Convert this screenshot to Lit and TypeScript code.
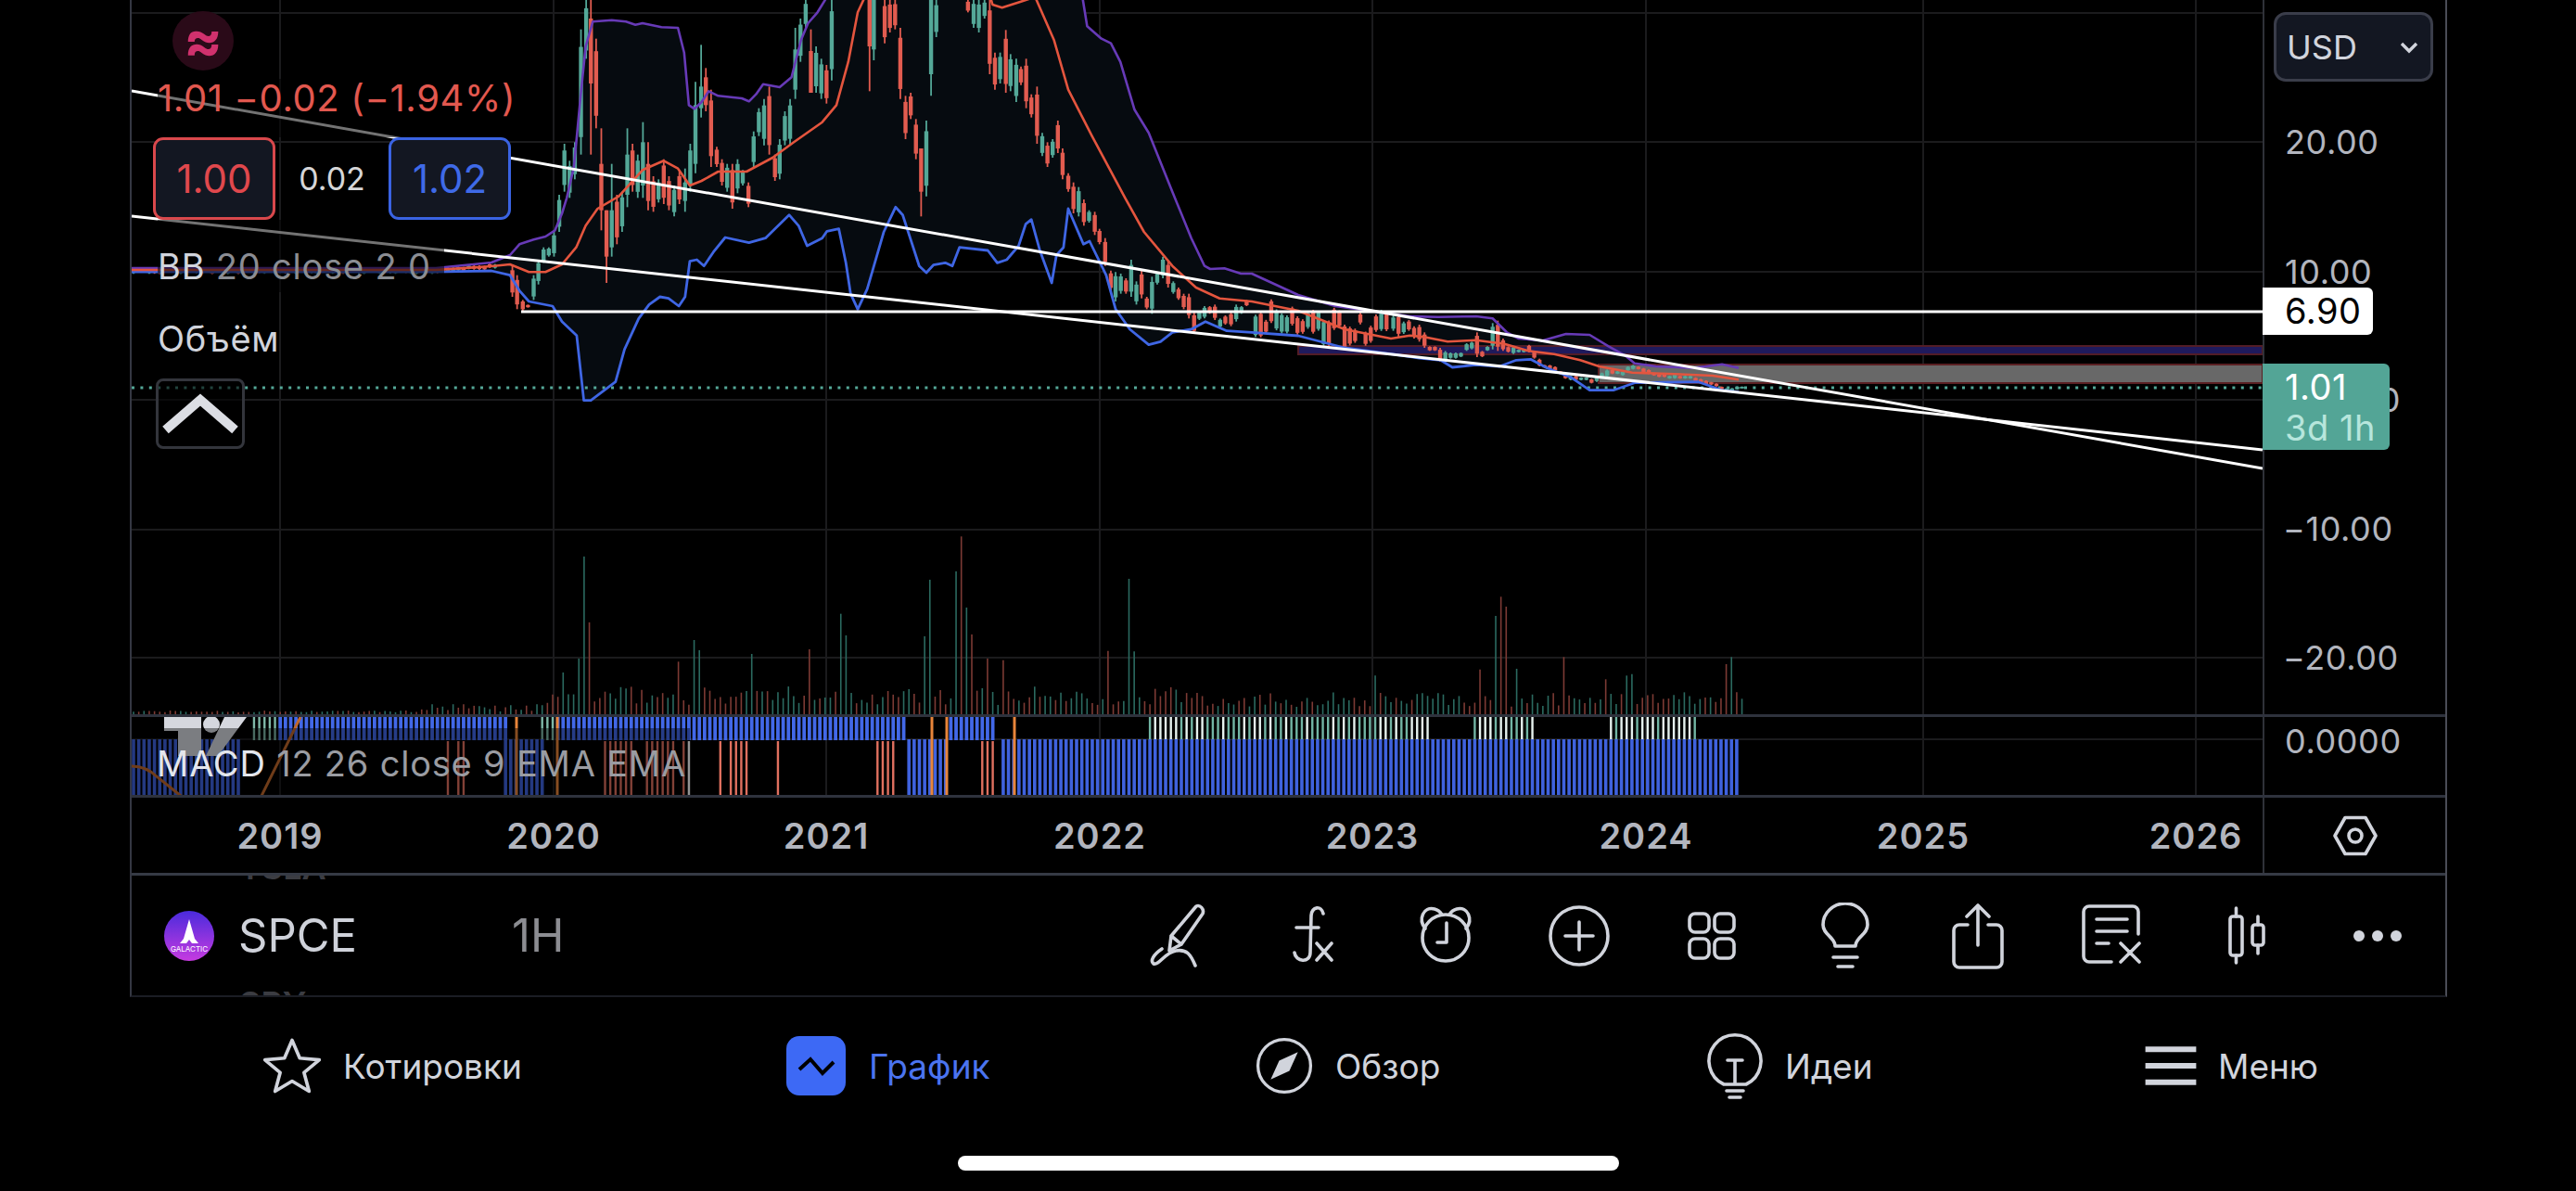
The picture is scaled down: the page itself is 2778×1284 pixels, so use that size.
import { LitElement, css, html, svg } from 'lit';
import { customElement } from 'lit/decorators.js';

type Pt = [number, number];
// [zoomX, colour, wickTop, wickBottom, bodyTop?, bodyBottom?]
type Candle = [number, 'g' | 'r', number, number, number?, number?];

const TEAL = '#54a898';
const RED = '#e25c50';
const STEP = 5.65;

const YEAR_X = [302, 597, 891, 1186, 1480, 1775, 2074, 2368];
const YEARS = ['2019', '2020', '2021', '2022', '2023', '2024', '2025', '2026'];
const GRID_Y = [14, 153, 293, 431, 571, 709];

const rnd = (i: number) => {
  const v = Math.sin(i * 12.9898 + 4.1) * 43758.5453;
  return v - Math.floor(v);
};

// traced with the horizontally squeezed crops, so x needs scaling back
const fromA = (p: Pt[]): Pt[] => p.map(([x, y]) => [550 + x / 1.96, y / 3]);
const fromB = (p: Pt[]): Pt[] => p.map(([x, y]) => [1500 + x / 1.96, 280 + y / 3]);
const toPoints = (p: Pt[]) => p.map(([x, y]) => `${x.toFixed(1)},${y.toFixed(1)}`).join(' ');

const UPPER: Pt[] = [
  [142, 289], [470, 289], [530, 283],
  ...fromA([[0, 825], [20, 790], [50, 775], [75, 765], [95, 745], [110, 690], [120, 640], [135, 540], [150, 300], [160, 150], [175, 70], [215, 65], [245, 70], [265, 80], [280, 75], [320, 88], [355, 90], [368, 170], [378, 340], [390, 352], [405, 330], [420, 295], [440, 310], [490, 318], [505, 328], [520, 305], [535, 272], [570, 282], [595, 250], [615, 130], [630, 75], [650, 40], [670, -10], [1210, -10], [1220, 85], [1250, 125], [1270, 140], [1290, 200], [1320, 355], [1350, 430], [1400, 620], [1440, 770], [1468, 860], [1480, 870], [1510, 868], [1545, 885], [1568, 885]]),
  [1400, 318], [1440, 330],
  ...fromB([[0, 175], [40, 183], [100, 185], [180, 183], [215, 190], [245, 235], [270, 255], [320, 262], [370, 240], [420, 243], [460, 280], [495, 310], [515, 335], [560, 345], [640, 350], [700, 338], [735, 350]]),
];

const LOWER: Pt[] = [
  [142, 293], [470, 293], [530, 292],
  ...fromA([[0, 890], [20, 940], [40, 975], [90, 990], [110, 1040], [141, 1085], [156, 1295], [171, 1295], [223, 1235], [242, 1130], [272, 1030], [294, 985], [317, 960], [335, 965], [357, 990], [370, 960], [380, 845], [395, 840], [410, 860], [430, 815], [455, 768], [505, 785], [540, 770], [590, 695], [610, 730], [628, 795], [660, 770], [670, 748], [695, 740], [710, 850], [720, 950], [735, 1000], [755, 935], [790, 750], [815, 670], [830, 695], [850, 790], [865, 860], [880, 882], [895, 857], [920, 850], [935, 860], [950, 800], [1010, 810], [1030, 850], [1050, 840], [1075, 795], [1090, 725], [1102, 710], [1120, 810], [1145, 915], [1155, 825], [1170, 800], [1180, 675], [1212, 790], [1225, 780], [1260, 890], [1280, 1000], [1310, 1065], [1350, 1115], [1375, 1105], [1400, 1075], [1440, 1065], [1470, 1040], [1515, 1070], [1568, 1075]]),
  [1400, 362], [1450, 375],
  ...fromB([[0, 305], [60, 318], [105, 325], [130, 348], [180, 340], [230, 345], [265, 325], [295, 322], [330, 350], [380, 380], [420, 422], [470, 422], [515, 398], [650, 395], [700, 422], [735, 428]]),
];

const BASIS: Pt[] = [
  [142, 291], [470, 291], [530, 287],
  ...fromA([[0, 855], [40, 880], [75, 880], [110, 855], [140, 800], [160, 730], [185, 675], [230, 635], [280, 550], [325, 520], [355, 545], [380, 600], [405, 585], [440, 555], [500, 555], [555, 510], [600, 460], [660, 395], [690, 340], [715, 200], [735, 40], [750, -10], [1015, -10], [1020, 15], [1040, 25], [1080, 5], [1110, -10], [1150, 130], [1180, 290], [1230, 440], [1300, 640], [1340, 750], [1400, 860], [1450, 930], [1500, 965], [1568, 975]]),
  [1400, 335], [1450, 355],
  ...fromB([[0, 255], [40, 245], [70, 250], [120, 265], [180, 260], [240, 272], [290, 295], [345, 305], [400, 325], [440, 345], [510, 365], [600, 370], [680, 375], [735, 388]]),
];

const CANDLES_A: Candle[] = [
  [5, 'r', 860, 960], [15, 'r', 890, 1000], [27, 'r', 970, 1005], [38, 'r', 985, 995], [50, 'g', 890, 970], [60, 'g', 840, 920], [71, 'g', 800, 850], [82, 'g', 800, 830], [93, 'g', 750, 830], [104, 'g', 630, 750], [115, 'g', 465, 620], [126, 'g', 520, 640], [137, 'g', 460, 580], [150, 'g', 95, 500], [161, 'g', 0, 190], [171, 'r', 0, 500, 60, 270], [182, 'r', 125, 415], [193, 'r', 415, 745, 530, 680], [204, 'r', 680, 915, 680, 830], [215, 'g', 530, 830, 680, 800], [226, 'r', 630, 790], [237, 'g', 620, 750], [248, 'g', 415, 670, 500, 630], [259, 'r', 465, 620], [270, 'g', 500, 640], [281, 'g', 395, 640, 460, 600], [292, 'r', 460, 680, 530, 650], [303, 'r', 570, 685], [314, 'g', 580, 655], [325, 'r', 515, 660], [336, 'r', 570, 680], [347, 'g', 600, 700], [358, 'r', 555, 660], [370, 'g', 545, 685, 590, 650], [381, 'g', 465, 620], [392, 'g', 265, 560, 340, 530], [404, 'g', 145, 380, 280, 350], [414, 'r', 220, 360, 250, 340], [425, 'r', 290, 540], [437, 'r', 475, 540], [448, 'r', 515, 600], [459, 'g', 530, 620], [470, 'r', 530, 675], [481, 'g', 515, 625], [492, 'g', 550, 600], [504, 'r', 590, 670], [515, 'g', 425, 540], [526, 'g', 350, 440], [537, 'g', 320, 470], [548, 'r', 280, 500], [560, 'r', 500, 585], [570, 'g', 450, 580], [581, 'g', 360, 470], [592, 'g', 320, 470], [603, 'g', 90, 320, 160, 290], [614, 'g', 60, 200], [625, 'g', 0, 90], [636, 'r', 95, 300, 165, 300], [647, 'g', 150, 300], [658, 'g', 190, 320], [669, 'r', 210, 335], [680, 'g', 0, 260],
  [760, 'r', 0, 295, 0, 150], [769, 'g', 0, 195, 0, 160], [792, 'r', 0, 140], [803, 'r', 0, 105], [814, 'r', 0, 95], [825, 'r', 90, 320], [836, 'r', 310, 450], [847, 'r', 300, 385], [858, 'r', 385, 515], [869, 'r', 480, 700, 480, 620], [880, 'g', 390, 635], [890, 'g', 0, 310, 0, 240], [901, 'g', 0, 120], [968, 'r', 0, 40], [980, 'g', 0, 90], [991, 'g', 0, 105], [1003, 'g', 0, 60], [1014, 'r', 0, 240], [1025, 'r', 170, 290], [1036, 'g', 170, 270], [1048, 'r', 97, 300], [1058, 'g', 175, 295], [1070, 'g', 190, 330], [1080, 'r', 215, 275], [1091, 'r', 190, 350], [1102, 'r', 305, 380], [1114, 'r', 280, 465], [1125, 'g', 430, 505], [1136, 'r', 460, 540], [1147, 'g', 450, 510], [1158, 'r', 390, 495], [1168, 'r', 480, 580], [1180, 'r', 560, 620], [1191, 'r', 590, 690], [1202, 'g', 605, 700], [1213, 'r', 645, 730], [1224, 'g', 680, 720], [1236, 'r', 685, 760], [1246, 'r', 740, 790], [1258, 'r', 770, 860], [1270, 'r', 875, 940], [1280, 'g', 880, 975], [1291, 'g', 885, 950], [1302, 'r', 900, 950], [1313, 'g', 840, 960], [1324, 'g', 910, 985], [1335, 'r', 875, 965], [1346, 'r', 960, 1000], [1357, 'g', 895, 1015], [1368, 'g', 880, 920], [1380, 'g', 830, 900], [1391, 'r', 845, 930], [1402, 'g', 910, 950], [1413, 'r', 930, 970], [1424, 'r', 950, 1000], [1435, 'r', 950, 1030], [1446, 'r', 1010, 1080], [1457, 'g', 1005, 1035], [1468, 'g', 990, 1030], [1479, 'r', 990, 1015], [1490, 'r', 985, 1035], [1501, 'g', 1030, 1060], [1512, 'r', 1020, 1050], [1524, 'r', 1010, 1055], [1535, 'g', 985, 1040], [1546, 'g', 990, 1015], [1557, 'r', 970, 990],
];

const CANDLES_B: Candle[] = [
  [5, 'g', 180, 230], [16, 'r', 175, 250], [27, 'g', 200, 240], [38, 'r', 195, 230], [49, 'r', 215, 255], [60, 'r', 210, 265], [71, 'r', 235, 285], [82, 'r', 280, 295], [93, 'r', 280, 295], [104, 'r', 285, 330], [115, 'g', 295, 330], [126, 'g', 300, 320], [137, 'g', 300, 320], [148, 'g', 300, 315], [160, 'g', 270, 295], [171, 'g', 265, 290], [182, 'r', 235, 315], [193, 'r', 295, 315], [204, 'g', 280, 295], [215, 'g', 205, 290], [226, 'r', 197, 295], [237, 'r', 255, 295], [248, 'r', 280, 300], [259, 'g', 280, 305], [270, 'g', 290, 300], [281, 'g', 288, 300], [292, 'r', 275, 300], [303, 'r', 295, 320], [314, 'r', 320, 345], [325, 'r', 340, 350], [336, 'r', 340, 355], [347, 'r', 345, 360], [358, 'r', 360, 370], [369, 'r', 370, 385], [380, 'g', 375, 390], [391, 'r', 375, 390], [402, 'g', 380, 390], [413, 'g', 380, 390], [424, 'r', 385, 400], [435, 'g', 375, 395], [446, 'g', 365, 385], [457, 'g', 355, 380], [468, 'r', 355, 370], [479, 'g', 360, 370], [490, 'g', 360, 375], [501, 'g', 345, 360], [512, 'g', 340, 355], [523, 'r', 345, 355], [534, 'r', 350, 365], [545, 'r', 355, 370], [556, 'r', 365, 375], [567, 'r', 370, 380], [578, 'r', 370, 380], [589, 'g', 375, 385], [600, 'g', 370, 385], [611, 'r', 375, 385], [622, 'g', 375, 385], [633, 'g', 375, 385], [644, 'r', 380, 395], [655, 'r', 385, 400], [666, 'r', 390, 405], [677, 'r', 395, 405], [688, 'r', 400, 410], [699, 'r', 410, 420], [710, 'g', 415, 425], [721, 'g', 415, 425], [732, 'g', 410, 420], [742, 'g', 410, 415],
];

// tall volume spikes, read from the crop: [zoomX, zoomY, green?]
const VOLUME_PEAKS: [number, number, boolean][] = [
  [437, 120, true], [442, 333, false], [432, 450, true], [417, 495, true], [540, 390, true], [545, 423, true], [525, 460, false], [595, 435, true], [649, 420, false], [678, 305, true], [683, 375, true], [761, 195, true], [757, 378, true], [782, 168, true], [787, 55, false], [797, 60, false], [792, 285, true], [801, 372, false], [815, 450, false], [830, 455, false], [925, 425, false], [949, 192, true], [953, 427, true], [1180, 505, true], [1294, 250, false], [1289, 312, true], [1299, 282, false], [1275, 485, false], [1309, 483, true], [1354, 445, false], [1393, 517, false], [1412, 505, true], [1417, 500, true], [1506, 468, false], [1511, 375, true], [1515, 445, true], [1521, 580, true],
];

function volumeBars() {
  const bars: { x: number; h: number; green: boolean }[] = [];
  for (let i = 0; i < 308; i++) {
    const x = 144 + i * STEP;
    let h = 2 + rnd(i) * 2;
    if (x > 450) h = 3 + rnd(i) * 8;
    if (x > 590) h = 10 + rnd(i) * 20;
    if (x > 1300) h = 8 + rnd(i) * 16;
    bars.push({ x, h, green: rnd(i + 500) > 0.5 });
  }
  for (const [zx, zy, green] of VOLUME_PEAKS) {
    const i = Math.round((zx - 12) / 4.92);
    bars[i] = { x: 144 + i * STEP, h: (630 - zy) / 3, green };
  }
  return bars;
}

const inRange = (x: number, ranges: number[][]) => ranges.some(([a, b]) => x >= a && x <= b);

// one weekly histogram column, by which stretch of the chart it falls in
function macdBars() {
  const out: { x: number; y: number; h: number; w: number; color: string }[] = [];
  for (let i = 0; i < 308; i++) {
    const x = 144 + i * STEP;
    if (inRange(x, [[302, 549], [601, 980], [1025, 1074]])) out.push({ x, y: 773, h: 25, w: 3.8, color: '#4268e8' });
    if (inRange(x, [[272, 302], [583, 601]])) out.push({ x, y: 773, h: 25, w: 2.4, color: '#7fb8a8' });
    if (inRange(x, [[1238, 1542], [1588, 1657], [1734, 1832]])) {
      out.push({ x, y: 773, h: 24, w: 2.4, color: rnd(i) > 0.45 ? '#e6f2ee' : '#72b5a4' });
    }
    if (inRange(x, [[144, 262], [541, 589], [980, 1003], [1008, 1020], [1077, 1878]])) {
      out.push({ x, y: 797, h: 60, w: 3.6, color: '#3f62de' });
    }
    if (inRange(x, [[479, 505], [652, 744], [776, 813], [834, 842], [942, 974], [1054, 1071]]) && rnd(i + 9) > 0.3) {
      out.push({ x, y: 799, h: 58, w: 2.4, color: x > 740 && x < 746 ? '#fff' : '#e0705f' });
    }
  }
  return out;
}

const strokeIcon = (size: number, body: unknown) => html`<svg class="icon" width=${size} height=${size} viewBox="0 0 72 72">${body}</svg>`;

@customElement('app-root')
export class AppRoot extends LitElement {
  static styles = css`
    :host {
      display: block;
      width: 2778px;
      height: 1284px;
      overflow: hidden;
      background: #000;
      font-family: Inter, Roboto, 'Noto Sans', sans-serif;
      color: #d1d4dc;
    }

    .screen {
      display: flex;
      flex-direction: column;
      height: 100%;
    }

    .frame {
      margin-left: 140px;
      width: 2499px;
      box-sizing: border-box;
      border-left: 2px solid #343742;
      border-right: 2px solid #4a4c56;
      height: 1075px;
      border-bottom: 2px solid #1b1d24;
      display: flex;
      flex-direction: column;
    }

    .pane {
      display: grid;
      grid-template-columns: 2298px 1fr;
      border-bottom: 3px solid #2e323d;
    }

    .pane.main { height: 770px; }
    .pane.macd { height: 84px; }

    .plot {
      position: relative;
      overflow: hidden;
    }

    .plot svg {
      display: block;
      width: 2298px;
      height: 100%;
    }

    .axis {
      position: relative;
      border-left: 2px solid #2f3138;
    }

    .tick {
      position: absolute;
      transform: translateY(-50%);
      font-size: 36px;
      line-height: 40px;
      letter-spacing: 0.6px;
      color: #b2b5be;
      white-space: nowrap;
    }

    .currency {
      position: absolute;
      left: 10px;
      top: 13px;
      width: 172px;
      height: 75px;
      box-sizing: border-box;
      border: 3px solid #3a3d4a;
      border-radius: 13px;
      background: #131722;
      display: flex;
      align-items: center;
      justify-content: space-between;
      padding: 0 12px 0 11px;
      font-size: 36px;
    }

    .mark {
      position: absolute;
      left: -2px;
      font-size: 38px;
      letter-spacing: 0.5px;
      border-radius: 0 6px 6px 0;
    }

    .mark.level {
      top: 310px;
      width: 119px;
      height: 51px;
      line-height: 51px;
      padding-left: 24px;
      box-sizing: border-box;
      background: #fff;
      color: #000;
    }

    .mark.last {
      top: 392px;
      width: 137px;
      height: 93px;
      padding: 3px 0 0 24px;
      box-sizing: border-box;
      background: #53a596;
      color: #fff;
      line-height: 44px;
    }

    .mark.last small {
      display: block;
      font-size: 38px;
      color: #b7e6dc;
    }

    .legend {
      position: absolute;
      left: 28px;
      top: 12px;
      display: flex;
      flex-direction: column;
      align-items: flex-start;
    }

    .legend > .dim {
      background: rgba(0, 0, 0, 0.55);
    }

    .badge {
      width: 66px;
      height: 64px;
      margin: 0 0 9px 16px;
      border-radius: 50%;
      background: #2a0a18;
      color: #d0316d;
      font-size: 62px;
      font-weight: 700;
      line-height: 62px;
      text-align: center;
    }

    .change {
      height: 63px;
      line-height: 42px;
      font-size: 40px;
      color: #e2584f;
      white-space: nowrap;
      letter-spacing: 0.6px;
    }

    .sides {
      display: flex;
      align-items: center;
      margin-left: -5px;
      height: 89px;
    }

    .side {
      width: 132px;
      height: 89px;
      box-sizing: border-box;
      border-radius: 11px;
      border: 3px solid;
      background: #131722;
      font-size: 42px;
      text-align: center;
      line-height: 83px;
    }

    .side.sell { border-color: #d9484c; color: #e0484d; }
    .side.buy { border-color: #3a63e2; color: #3f6ae8; }

    .spread {
      width: 122px;
      text-align: center;
      font-size: 34px;
      color: #d6d6d8;
    }

    .study {
      height: 78px;
      line-height: 100px;
      padding-right: 14px;
      white-space: nowrap;
      color: #d1d4dc;
      font-size: 38px;
      letter-spacing: 0.8px;
    }

    .study span {
      color: #8b8d93;
    }

    .expand {
      width: 96px;
      height: 76px;
      margin: 15px 0 0 -2px;
      box-sizing: border-box;
      border: 3px solid #33353c;
      border-radius: 8px;
      background: rgba(0, 0, 0, 0.6);
      display: flex;
      align-items: center;
      justify-content: center;
    }

    .macd-legend {
      position: absolute;
      left: 0;
      top: 12px;
      bottom: 0;
      width: 602px;
      padding-left: 27px;
      box-sizing: border-box;
      background: rgba(0, 0, 0, 0.42);
      font-size: 38px;
      letter-spacing: 0.8px;
      line-height: 76px;
      white-space: nowrap;
      color: #e4e6ec;
    }

    .macd-legend span {
      color: #9a9ca2;
    }

    .times {
      display: grid;
      grid-template-columns: 2298px 1fr;
      height: 81px;
      border-bottom: 3px solid #363a45;
    }

    .years {
      position: relative;
    }

    .year {
      position: absolute;
      top: 18px;
      transform: translateX(-50%);
      font-size: 38px;
      font-weight: 600;
      letter-spacing: 1px;
      color: #b2b5be;
    }

    .gear {
      border-left: 2px solid #2f3138;
      display: flex;
      align-items: center;
      justify-content: center;
    }

    .toolbar {
      position: relative;
      flex: 1;
      display: flex;
      align-items: center;
      overflow: hidden;
    }

    .ghost {
      position: absolute;
      left: 116px;
      font-size: 36px;
      font-weight: 600;
      line-height: 36px;
      color: #3b3c42;
    }

    .ghost.above { top: -27px; }
    .ghost.below { bottom: -27px; }

    .symbol {
      display: flex;
      align-items: center;
      margin-left: 35px;
      width: 1023px;
    }

    .symbol svg {
      flex: none;
    }

    .ticker {
      width: 295px;
      margin-left: 26px;
      font-size: 49px;
      color: #cfd2da;
    }

    .interval {
      font-size: 49px;
      color: #8c8d92;
    }

    .tools {
      display: flex;
    }

    .tool {
      width: 143.6px;
      display: flex;
      justify-content: center;
    }

    .icon {
      display: block;
      fill: none;
      stroke: #d1d4dc;
      stroke-width: 3.6;
      stroke-linecap: round;
      stroke-linejoin: round;
    }

    .tabs {
      display: grid;
      grid-template-columns: 566px 504px 491px 469px auto;
      padding-left: 282px;
      height: 148px;
      align-items: center;
      font-size: 37px;
    }

    .tab {
      display: flex;
      align-items: center;
      gap: 22px;
      white-space: nowrap;
    }

    .tab.active {
      color: #4b74f0;
      gap: 25px;
    }

    .bulb {
      margin: 0 -4px 0 -8px;
    }

    .pill {
      width: 64px;
      height: 64px;
      border-radius: 14px;
      background: #3d69f5;
    }

    .home {
      width: 713px;
      height: 16px;
      margin: 23px auto 0;
      border-radius: 8px;
      background: #fff;
    }
  `;

  private renderCandle(x: number, color: string, wt: number, wb: number, bt: number, bb: number) {
    return svg`
      <line x1=${x} x2=${x} y1=${wt} y2=${wb} stroke=${color} stroke-width="1.8"></line>
      <rect x=${x - 2.2} y=${bt} width="4.4" height=${Math.max(bb - bt, 2)} fill=${color}></rect>
    `;
  }

  private renderCandles() {
    const parts: unknown[] = [];
    // flat stretch before the first move
    for (let x = 144; x < 535; x += STEP) {
      const i = Math.round(x);
      const y = 289 - (x > 470 ? (x - 470) / 12 : 0) + rnd(i) * 3;
      parts.push(this.renderCandle(x, rnd(i + 3) > 0.5 ? TEAL : RED, y - 1, y + 4, y, y + 3));
    }
    const read = (c: Candle, map: (p: Pt[]) => Pt[]) => {
      const [zx, tone, wt, wb, bt, bb] = c;
      const [[x, top], [, bottom]] = map([[zx, wt], [zx, wb]]);
      const inset = (bottom - top) * 0.14;
      const bodyTop = bt === undefined ? top + inset : map([[zx, bt]])[0][1];
      const bodyBottom = bb === undefined ? bottom - inset : map([[zx, bb]])[0][1];
      parts.push(this.renderCandle(x, tone === 'g' ? TEAL : RED, top, bottom, bodyTop, bodyBottom));
    };
    CANDLES_A.forEach((c) => read(c, fromA));
    for (let x = 1354; x < 1498; x += STEP) {
      const i = Math.round(x);
      const mid = 342 + (x - 1350) * 0.1 + (rnd(i) - 0.5) * 22;
      const half = 4 + rnd(i + 2) * 8;
      parts.push(this.renderCandle(x, rnd(i + 7) > 0.5 ? TEAL : RED, mid - half - 2, mid + half + 2, mid - half, mid + half));
    }
    CANDLES_B.forEach((c) => read(c, fromB));
    return parts;
  }

  private renderGrid(ys: number[]) {
    return svg`
      ${YEAR_X.map((x) => svg`<line x1=${x} x2=${x} y1="0" y2="860" stroke="#1b1b1d" stroke-width="2"></line>`)}
      ${ys.map((y) => svg`<line x1="142" x2="2440" y1=${y} y2=${y} stroke="#1b1b1d" stroke-width="2"></line>`)}
    `;
  }

  private renderMainPlot() {
    const band = [...UPPER.filter(([x]) => x >= 530), ...LOWER.filter(([x]) => x >= 530).reverse()];
    return svg`
      <svg viewBox="142 0 2298 770">
        ${this.renderGrid(GRID_Y)}
        <polygon points=${toPoints(band)} fill="#060b10"></polygon>
        <rect x="1400" y="373" width="1040" height="9" fill="#1f1a5c" stroke="#521c26" stroke-width="2"></rect>
        <rect x="1724" y="393" width="716" height="20" fill="#686868" stroke="#5a1f22" stroke-width="2"></rect>
        ${volumeBars().map(
          (b) => svg`<line x1=${b.x} x2=${b.x} y1=${770} y2=${770 - b.h} stroke=${b.green ? '#2b6a60' : '#7c3a34'} stroke-width="1.6"></line>`,
        )}
        <line x1="142" x2="2440" y1="418" y2="418" stroke=${TEAL} stroke-width="3" stroke-dasharray="3 6.4"></line>
        ${this.renderCandles()}
        <polyline points=${toPoints(UPPER)} fill="none" stroke="#673ab7" stroke-width="2.6" stroke-linejoin="round"></polyline>
        <polyline points=${toPoints(LOWER)} fill="none" stroke="#3f66e4" stroke-width="2.8" stroke-linejoin="round"></polyline>
        <polyline points=${toPoints(BASIS)} fill="none" stroke="#e4553e" stroke-width="2.6" stroke-linejoin="round"></polyline>
        <line x1="562" x2="2440" y1="336" y2="336" stroke="#fff" stroke-width="3"></line>
        <line x1="142" x2="2440" y1="98" y2="505" stroke="#fff" stroke-width="3"></line>
        <line x1="142" x2="2440" y1="233" y2="485" stroke="#fff" stroke-width="3"></line>
      </svg>
    `;
  }

  private renderMacdPlot() {
    return svg`
      <svg viewBox="142 773 2298 84">
        ${this.renderGrid([797])}
        ${macdBars().map(
          (b) => svg`<rect x=${b.x - b.w / 2} y=${b.y} width=${b.w} height=${b.h} fill=${b.color}></rect>`,
        )}
        ${[557, 601, 1005, 1021, 1094].map(
          (x) => svg`<line x1=${x} x2=${x} y1="773" y2="858" stroke="#e8853a" stroke-width="3"></line>`,
        )}
        <path d="M142 826 Q158 826 170 838 L195 858 M282 858 L324 773" fill="none" stroke="#c0682b" stroke-width="3"></path>
        <path d="M177 773 H217 V815 H192 V788 H177 Z M242 773 H266 L235 815 H222 Z" fill="#d5d7de"></path>
        <circle cx="228" cy="781" r="9" fill="#d5d7de"></circle>
      </svg>
    `;
  }

  private renderAxis() {
    const ticks: [number, number, string][] = [
      [153, 22, '20.00'],
      [293, 22, '10.00'],
      [431, 68, '0.00'],
      [570, 20, '−10.00'],
      [709, 20, '−20.00'],
    ];
    return html`
      <div class="axis">
        <div class="currency">
          USD
          <svg width="22" height="14" viewBox="0 0 22 14"><path d="M3 3 L11 11 L19 3" fill="none" stroke="#d1d4dc" stroke-width="3.4"></path></svg>
        </div>
        ${ticks.map(([y, x, label]) => html`<div class="tick" style="top:${y}px;left:${x}px">${label}</div>`)}
        <div class="mark level">6.90</div>
        <div class="mark last">1.01<small>3d 1h</small></div>
      </div>
    `;
  }

  private renderTools() {
    const tools = [
      svg`<path d="M54 4 C58 2 63 7 61 12 L38 45 L25 52 L27 36 Z M27 36 L38 45"></path><path d="M17 50 C8 56 4 63 8 66 C14 68 20 54 32 52 C44 50 48 56 53 68"></path>`,
      svg`<path d="M48 12 C46 3 36 4 35 14 L34 54 C34 66 18 64 17 54 M19 27 H43 M41 44 L57 62 M57 44 L41 62"></path>`,
      svg`<circle cx="36" cy="38" r="25"></circle><path d="M14 28 C6 18 12 4 24 7 C28 8 30 10 32 13 M40 13 C42 10 44 8 48 7 C60 4 66 18 58 28 M37 22 V43 H27"></path>`,
      svg`<circle cx="36" cy="36" r="31"></circle><path d="M36 21 V51 M21 36 H51"></path>`,
      svg`<rect x="12" y="12" width="21" height="20" rx="6"></rect><rect x="39" y="12" width="21" height="20" rx="6"></rect><rect x="12" y="39" width="21" height="21" rx="6"></rect><rect x="39" y="39" width="21" height="21" rx="6"></rect>`,
      svg`<path d="M25 47 C25 37 12 35 12 24 A24 23 0 0 1 60 24 C60 35 47 37 47 47 Z M23 59 H49 M28 69 H44"></path>`,
      svg`<path d="M25 24 H16 A6 6 0 0 0 10 30 V64 A6 6 0 0 0 16 70 H56 A6 6 0 0 0 62 64 V30 A6 6 0 0 0 56 24 H47 M36 46 V3 M24 15 L36 3 L48 15"></path>`,
      svg`<path d="M65 34 V10 A6 6 0 0 0 59 4 H12 A6 6 0 0 0 6 10 V58 A6 6 0 0 0 12 64 H36 M20 18 H53 M20 31 H53 M20 44 H33 M46 44 L66 64 M66 44 L46 64"></path>`,
      svg`<path d="M26.500 6 V15 M26.500 57 V65 M50 15 V24 M50 46 V55"></path><rect x="20" y="15" width="13" height="42" rx="3"></rect><rect x="44" y="24" width="12" height="22" rx="3"></rect>`,
      svg`<circle cx="16" cy="36" r="6" fill="#d1d4dc" stroke="none"></circle><circle cx="36" cy="36" r="6" fill="#d1d4dc" stroke="none"></circle><circle cx="56" cy="36" r="6" fill="#d1d4dc" stroke="none"></circle>`,
    ];
    return html`<div class="tools">${tools.map((t) => html`<div class="tool">${strokeIcon(72, t)}</div>`)}</div>`;
  }

  render() {
    return html`
      <div class="screen">
        <div class="frame">
          <div class="pane main">
            <div class="plot">
              ${this.renderMainPlot()}
              <div class="legend">
                <div class="badge">≈</div>
                <div class="change dim">1.01 −0.02 (−1.94%)</div>
                <div class="sides">
                  <div class="side sell">1.00</div>
                  <div class="spread">0.02</div>
                  <div class="side buy">1.02</div>
                </div>
                <div class="study dim">BB <span>20 close 2 0</span></div>
                <div class="study">Объём</div>
                <div class="expand">
                  <svg width="36" height="20" viewBox="0 0 36 20"><path d="M3 17 L18 4 L33 17" fill="none" stroke="#dcdee4" stroke-width="4"></path></svg>
                </div>
              </div>
            </div>
            ${this.renderAxis()}
          </div>
          <div class="pane macd">
            <div class="plot">
              ${this.renderMacdPlot()}
              <div class="macd-legend">MACD <span>12 26 close 9 EMA EMA</span></div>
            </div>
            <div class="axis">
              <div class="tick" style="top:26px;left:22px">0.0000</div>
            </div>
          </div>
          <div class="times">
            <div class="years">
              ${YEARS.map((y, i) => html`<div class="year" style="left:${YEAR_X[i] - 142}px">${y}</div>`)}
            </div>
            <div class="gear">
              <svg class="icon" width="48" height="48" viewBox="0 0 48 48"><path d="M13 4.500 H35 L46 24 L35 43.500 H13 L2 24 Z"></path><circle cx="24" cy="24" r="7"></circle></svg>
            </div>
          </div>
          <div class="toolbar">
            <div class="ghost above">TSLA</div>
            <div class="ghost below">SPY</div>
            <div class="symbol">
              <svg width="54" height="54" viewBox="0 0 54 54">
                <defs>
                  <linearGradient id="galactic" x1="0" y1="0" x2="0" y2="1">
                    <stop offset="0" stop-color="#4a2bdc"></stop>
                    <stop offset="1" stop-color="#c63be0"></stop>
                  </linearGradient>
                </defs>
                <circle cx="27" cy="27" r="27" fill="url(#galactic)"></circle>
                <path d="M27 9 L33 30 L37 35 H30 L27 31 L24 35 H17 L21 30 Z" fill="#fff"></path>
                <text x="27" y="44" text-anchor="middle" font-size="8" fill="#fff">GALACTIC</text>
              </svg>
              <div class="ticker">SPCE</div>
              <div class="interval">1H</div>
            </div>
            ${this.renderTools()}
          </div>
        </div>
        <nav class="tabs">
          <div class="tab">
            ${strokeIcon(66, svg`<path d="M36 6 L45 27 L68 29 L50 44 L56 66 L36 54 L16 66 L22 44 L4 29 L27 27 Z" stroke-width="4"></path>`)}
            Котировки
          </div>
          <div class="tab active">
            <div class="pill">
              <svg width="64" height="64" viewBox="0 0 64 64"><path d="M14 36 L26 25 L39 40 L51 28" fill="none" stroke="#000" stroke-width="4"></path></svg>
            </div>
            График
          </div>
          <div class="tab">
            ${strokeIcon(66, svg`<circle cx="36" cy="36" r="31"></circle><path d="M52 20 L30 30 L20 52 L42 42 Z" fill="#d1d4dc" stroke="none"></path>`)}
            Обзор
          </div>
          <div class="tab">
            <div class="bulb">
              ${strokeIcon(72, svg`<path d="M24 56 A28 28 0 1 1 48 56 Z M28 30 H44 M36 30 V54 M27 63 H45 M30 70 H42"></path>`)}
            </div>
            Идеи
          </div>
          <div class="tab">
            ${strokeIcon(58, svg`<path d="M2 14 H70 M2 36 H70 M2 58 H70" stroke-width="7.500" stroke-linecap="butt"></path>`)}
            Меню
          </div>
        </nav>
        <div class="home"></div>
      </div>
    `;
  }
}

declare global {
  interface HTMLElementTagNameMap {
    'app-root': AppRoot;
  }
}
